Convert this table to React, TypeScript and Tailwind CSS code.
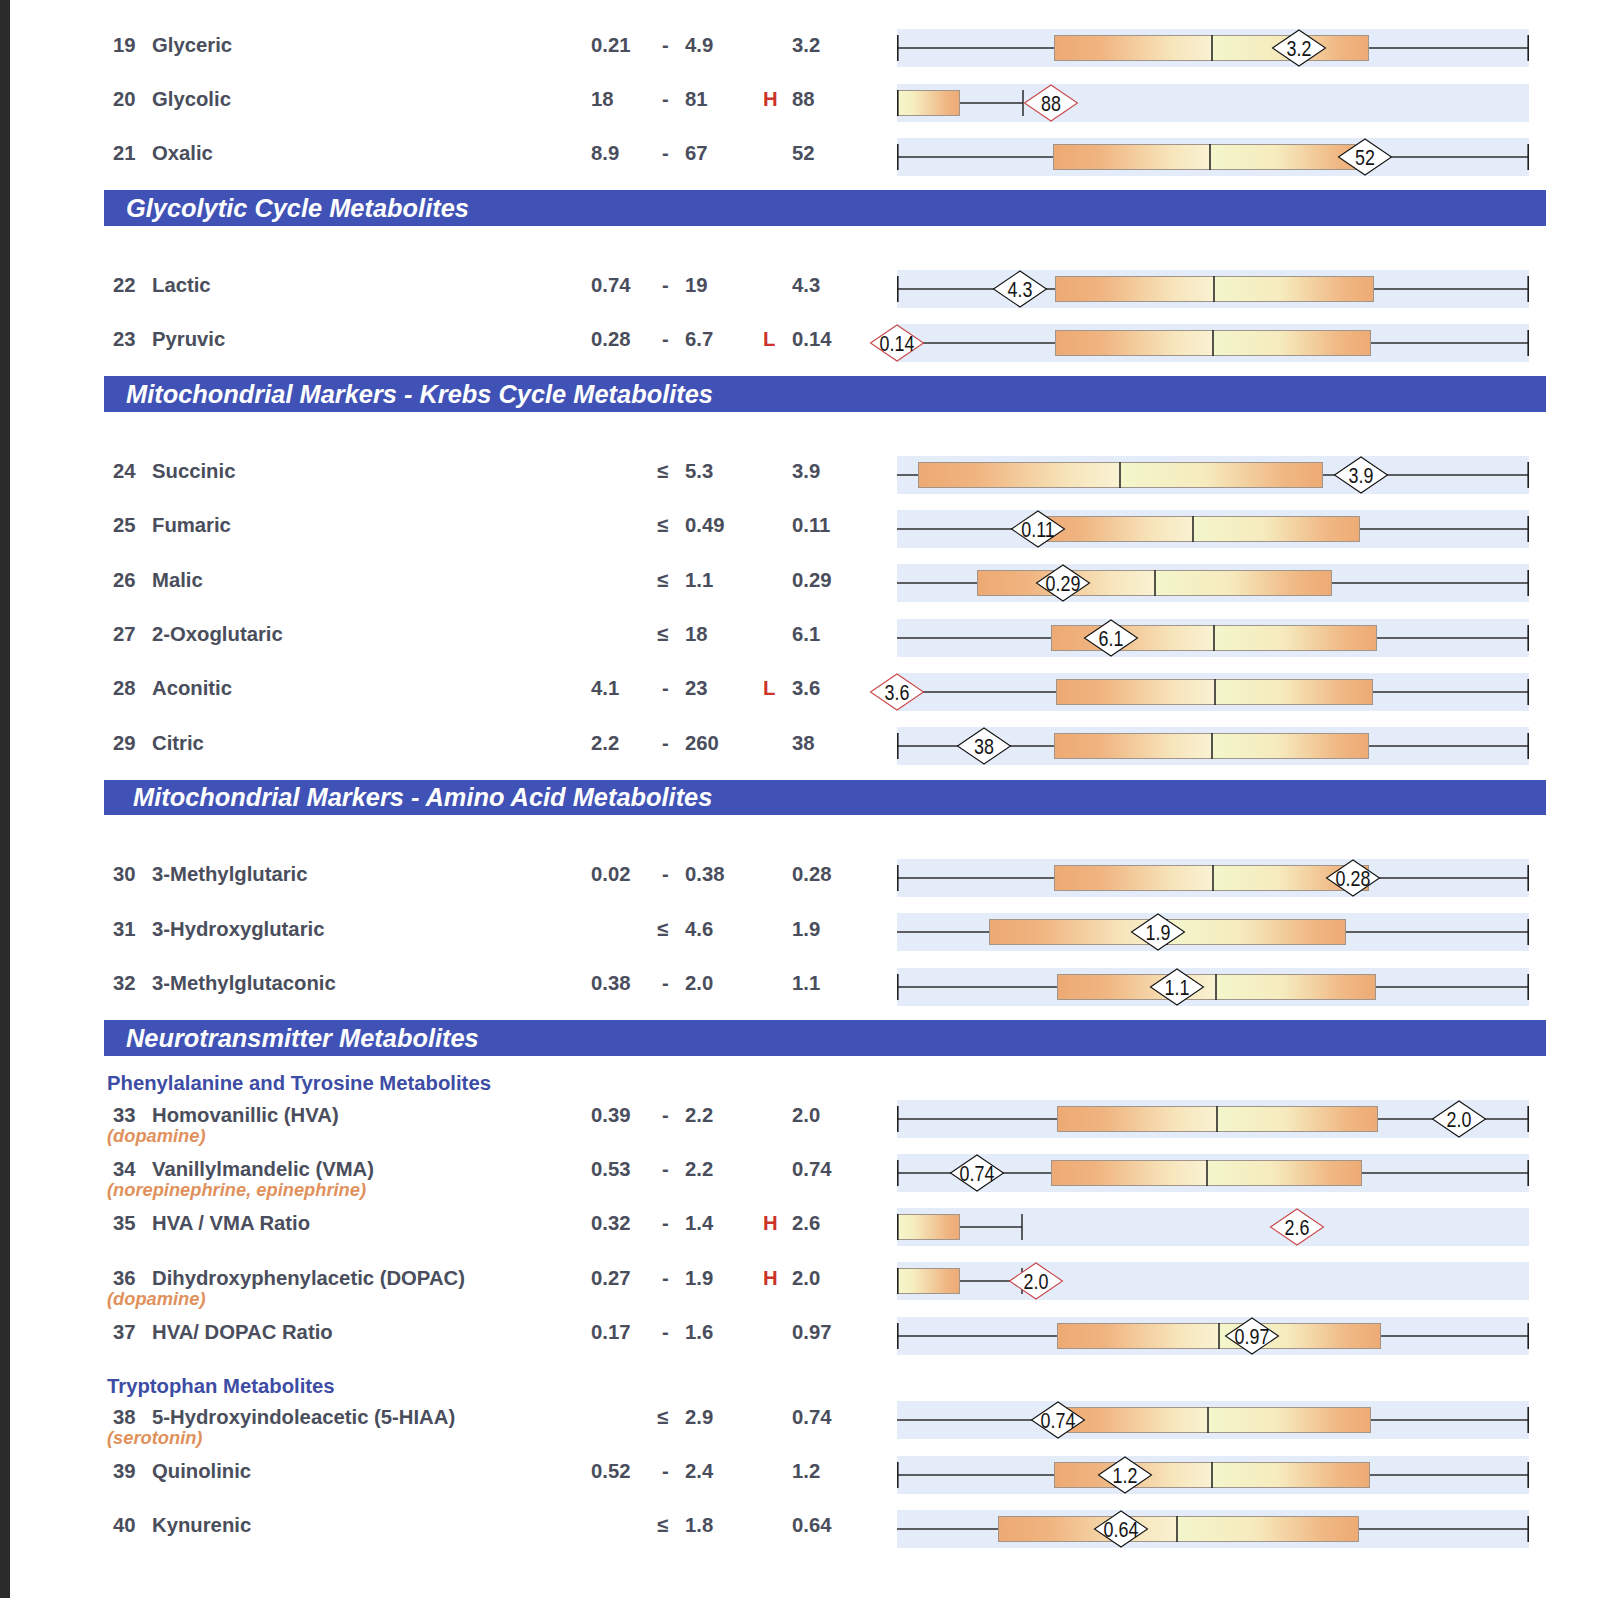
import React from 'react';

type ChartSpec =
  | { k: 'n'; b0: number; b1: number; m: number; d: number; lt: boolean; red?: boolean }
  | { k: 'h'; d: number; t: number };

type Row = {
  n: number;
  name: string;
  lo?: string;
  hi: string;
  le?: boolean;
  flag?: 'H' | 'L';
  val: string;
  sub?: string;
  c: ChartSpec;
};

const W = 632;
const H = 38;
const CY = 19;

function Diamond({ x, label, red }: { x: number; label: string; red?: boolean }) {
  const hw = 26.5;
  const hh = 18;
  return (
    <g>
      <polygon
        points={`${x - hw},${CY} ${x},${CY - hh} ${x + hw},${CY} ${x},${CY + hh}`}
        fill="#ffffff"
        stroke={red ? '#c9474a' : '#141414'}
        strokeWidth={1.1}
      />
      <text
        transform={`translate(${x} ${CY + 7.6}) scale(0.84 1)`}
        textAnchor="middle"
        fontSize={21.3}
        fontFamily="'Liberation Sans', Arial, sans-serif"
        fill="#141414"
      >
        {label}
      </text>
    </g>
  );
}

function Chart({ c, id, label }: { c: ChartSpec; id: number; label: string }) {
  const gA = `gA${id}`;
  const gB = `gB${id}`;
  const gC = `gC${id}`;
  return (
    <svg width={W} height={H} viewBox={`0 0 ${W} ${H}`} overflow="visible" className="block overflow-visible">
      <defs>
        <linearGradient id={gA} x1="0" y1="0" x2="1" y2="0">
          <stop offset="0" stopColor="#eea973" />
          <stop offset="0.3" stopColor="#f0b581" />
          <stop offset="0.75" stopColor="#f7e5bb" />
          <stop offset="1" stopColor="#f9f2d3" />
        </linearGradient>
        <linearGradient id={gB} x1="0" y1="0" x2="1" y2="0">
          <stop offset="0" stopColor="#f3f6cb" />
          <stop offset="0.42" stopColor="#f6ebbe" />
          <stop offset="0.8" stopColor="#f0b884" />
          <stop offset="1" stopColor="#eeaa74" />
        </linearGradient>
        <linearGradient id={gC} x1="0" y1="0" x2="1" y2="0">
          <stop offset="0" stopColor="#f6f7cb" />
          <stop offset="0.25" stopColor="#f6eec1" />
          <stop offset="0.8" stopColor="#efb582" />
          <stop offset="1" stopColor="#eeaa74" />
        </linearGradient>
      </defs>
      <rect x={0} y={0} width={W} height={H} fill="#e5ecf9" />
      {c.k === 'n' ? (
        <g>
          <line x1={0} x2={W} y1={CY} y2={CY} stroke="#2e2e2e" strokeWidth={1.3} />
          {c.lt && <line x1={0.8} x2={0.8} y1={6} y2={32} stroke="#1e1e1e" strokeWidth={1.6} />}
          <line x1={W - 0.8} x2={W - 0.8} y1={6} y2={32} stroke="#1e1e1e" strokeWidth={1.6} />
          <rect x={c.b0} y={6} width={c.m - c.b0} height={26} fill={`url(#${gA})`} />
          <rect x={c.m} y={6} width={c.b1 - c.m} height={26} fill={`url(#${gB})`} />
          <rect x={c.b0 + 0.5} y={6.5} width={c.b1 - c.b0 - 1} height={25} fill="none" stroke="#a0958a" strokeWidth={1} />
          <line x1={c.m} x2={c.m} y1={6} y2={32} stroke="#1e1e1e" strokeWidth={1.5} />
          <Diamond x={c.d} label={label} red={c.red} />
        </g>
      ) : (
        <g>
          <rect x={0} y={6} width={63} height={26} fill={`url(#${gC})`} />
          <rect x={0.5} y={6.5} width={62} height={25} fill="none" stroke="#a0958a" strokeWidth={1} />
          <line x1={0.8} x2={0.8} y1={6} y2={32} stroke="#1e1e1e" strokeWidth={1.6} />
          <line x1={63} x2={c.t} y1={CY} y2={CY} stroke="#2e2e2e" strokeWidth={1.3} />
          <line x1={c.t} x2={c.t} y1={6} y2={32} stroke="#1e1e1e" strokeWidth={1.4} />
          <Diamond x={c.d} label={label} red />
        </g>
      )}
    </svg>
  );
}

function DataRow({ r }: { r: Row }) {
  return (
    <div className="flex h-[54.3px]">
      <div className="w-[793px] shrink-0 pt-[11.3px]">
        <div className="flex h-[24px] items-center whitespace-nowrap text-[20.3px] leading-[24px] font-bold text-[#4a4e5c]">
          <div className="w-[9px] shrink-0" />
          <div className="w-[39px] shrink-0">{r.n}</div>
          <div className="w-[439px] shrink-0">{r.name}</div>
          <div className="w-[66px] shrink-0">{r.lo ?? ''}</div>
          <div className="w-[28px] shrink-0">{r.le ? '≤' : <span className="pl-[5px]">-</span>}</div>
          <div className="w-[78px] shrink-0">{r.hi}</div>
          <div className="w-[29px] shrink-0 text-[#cc3329]">{r.flag ?? ''}</div>
          <div className="w-[105px] shrink-0">{r.val}</div>
        </div>
        {r.sub && (
          <div className="whitespace-nowrap pl-[3px] text-[18.3px] leading-[18px] font-bold italic text-[#e0915c]">
            {r.sub}
          </div>
        )}
      </div>
      <div className="mt-[8px] shrink-0">
        <Chart c={r.c} id={r.n} label={r.val} />
      </div>
    </div>
  );
}

function Header({ title, extra }: { title: string; extra?: boolean }) {
  return (
    <div
      className={`mt-[6px] flex h-[35.5px] w-[1442px] items-center bg-[#4052b5] text-[25.4px] font-bold italic text-white whitespace-nowrap ${
        extra ? 'pl-[29px]' : 'pl-[22px]'
      }`}
    >
      {title}
    </div>
  );
}

const sec0: Row[] = [
  { n: 19, name: 'Glyceric', lo: '0.21', hi: '4.9', val: '3.2', c: { k: 'n', b0: 157, b1: 472, m: 315, d: 402, lt: true } },
  { n: 20, name: 'Glycolic', lo: '18', hi: '81', flag: 'H', val: '88', c: { k: 'h', d: 154, t: 126 } },
  { n: 21, name: 'Oxalic', lo: '8.9', hi: '67', val: '52', c: { k: 'n', b0: 156, b1: 472, m: 313, d: 468, lt: true } },
];

const sec1: Row[] = [
  { n: 22, name: 'Lactic', lo: '0.74', hi: '19', val: '4.3', c: { k: 'n', b0: 158, b1: 477, m: 317, d: 123, lt: true } },
  { n: 23, name: 'Pyruvic', lo: '0.28', hi: '6.7', flag: 'L', val: '0.14', c: { k: 'n', b0: 158, b1: 474, m: 316, d: 0, lt: false, red: true } },
];

const sec2: Row[] = [
  { n: 24, name: 'Succinic', le: true, hi: '5.3', val: '3.9', c: { k: 'n', b0: 21, b1: 426, m: 223, d: 464, lt: false } },
  { n: 25, name: 'Fumaric', le: true, hi: '0.49', val: '0.11', c: { k: 'n', b0: 136, b1: 463, m: 296, d: 141, lt: false } },
  { n: 26, name: 'Malic', le: true, hi: '1.1', val: '0.29', c: { k: 'n', b0: 80, b1: 435, m: 258, d: 166, lt: false } },
  { n: 27, name: '2-Oxoglutaric', le: true, hi: '18', val: '6.1', c: { k: 'n', b0: 154, b1: 480, m: 317, d: 214, lt: false } },
  { n: 28, name: 'Aconitic', lo: '4.1', hi: '23', flag: 'L', val: '3.6', c: { k: 'n', b0: 159, b1: 476, m: 318, d: 0, lt: false, red: true } },
  { n: 29, name: 'Citric', lo: '2.2', hi: '260', val: '38', c: { k: 'n', b0: 157, b1: 472, m: 315, d: 87, lt: true } },
];

const sec3: Row[] = [
  { n: 30, name: '3-Methylglutaric', lo: '0.02', hi: '0.38', val: '0.28', c: { k: 'n', b0: 157, b1: 472, m: 316, d: 456, lt: true } },
  { n: 31, name: '3-Hydroxyglutaric', le: true, hi: '4.6', val: '1.9', c: { k: 'n', b0: 92, b1: 449, m: 270, d: 261, lt: false } },
  { n: 32, name: '3-Methylglutaconic', lo: '0.38', hi: '2.0', val: '1.1', c: { k: 'n', b0: 160, b1: 479, m: 319, d: 280, lt: true } },
];

const sec4a: Row[] = [
  { n: 33, name: 'Homovanillic (HVA)', lo: '0.39', hi: '2.2', val: '2.0', sub: '(dopamine)', c: { k: 'n', b0: 160, b1: 481, m: 320, d: 562, lt: true } },
  { n: 34, name: 'Vanillylmandelic (VMA)', lo: '0.53', hi: '2.2', val: '0.74', sub: '(norepinephrine, epinephrine)', c: { k: 'n', b0: 154, b1: 465, m: 310, d: 80, lt: true } },
  { n: 35, name: 'HVA / VMA Ratio', lo: '0.32', hi: '1.4', flag: 'H', val: '2.6', c: { k: 'h', d: 400, t: 125 } },
  { n: 36, name: 'Dihydroxyphenylacetic (DOPAC)', lo: '0.27', hi: '1.9', flag: 'H', val: '2.0', sub: '(dopamine)', c: { k: 'h', d: 139, t: 125 } },
  { n: 37, name: 'HVA/ DOPAC Ratio', lo: '0.17', hi: '1.6', val: '0.97', c: { k: 'n', b0: 160, b1: 484, m: 322, d: 355, lt: true } },
];

const sec4b: Row[] = [
  { n: 38, name: '5-Hydroxyindoleacetic (5-HIAA)', le: true, hi: '2.9', val: '0.74', sub: '(serotonin)', c: { k: 'n', b0: 160, b1: 474, m: 311, d: 161, lt: false } },
  { n: 39, name: 'Quinolinic', lo: '0.52', hi: '2.4', val: '1.2', c: { k: 'n', b0: 157, b1: 473, m: 315, d: 228, lt: true } },
  { n: 40, name: 'Kynurenic', le: true, hi: '1.8', val: '0.64', c: { k: 'n', b0: 101, b1: 462, m: 280, d: 224, lt: false } },
];

export default function App() {
  return (
    <div className="flex min-h-[1598px] w-full bg-white font-['Liberation_Sans',Arial,sans-serif]">
      <div className="w-[10px] shrink-0 self-stretch bg-[#2b2b2b]" />
      <div className="ml-[94px] flex flex-col pt-[21.4px]">
        {sec0.map((r) => (
          <DataRow key={r.n} r={r} />
        ))}
        <Header title="Glycolytic Cycle Metabolites" />
        <div className="h-[36px]" />
        {sec1.map((r) => (
          <DataRow key={r.n} r={r} />
        ))}
        <Header title="Mitochondrial Markers - Krebs Cycle Metabolites" />
        <div className="h-[36px]" />
        {sec2.map((r) => (
          <DataRow key={r.n} r={r} />
        ))}
        <Header title="Mitochondrial Markers - Amino Acid Metabolites" extra />
        <div className="h-[36px]" />
        {sec3.map((r) => (
          <DataRow key={r.n} r={r} />
        ))}
        <Header title="Neurotransmitter Metabolites" />
        <div className="h-[36px] pl-[3px] pt-[17.8px] text-[20.3px] leading-[20px] font-bold text-[#3d4ca4] whitespace-nowrap">
          Phenylalanine and Tyrosine Metabolites
        </div>
        {sec4a.map((r) => (
          <DataRow key={r.n} r={r} />
        ))}
        <div className="h-[30.4px] pl-[3px] pt-[12.7px] text-[20.3px] leading-[20px] font-bold text-[#3d4ca4] whitespace-nowrap">
          Tryptophan Metabolites
        </div>
        {sec4b.map((r) => (
          <DataRow key={r.n} r={r} />
        ))}
      </div>
    </div>
  );
}
